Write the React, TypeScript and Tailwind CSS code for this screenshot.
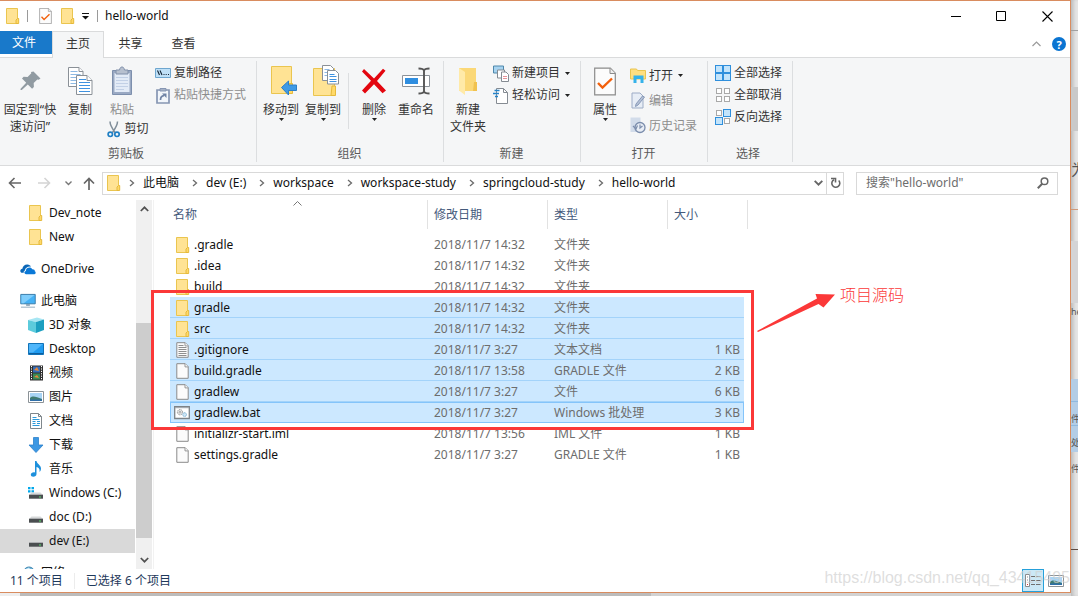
import type { ReactNode } from "react";

/* ---------- icons ---------- */

function Folder({ className = "h-4 w-[15px]" }: { className?: string }) {
  return (
    <svg viewBox="0 0 15 16" className={className} aria-hidden="true">
      <path d="M.5.5h11v15H.5z" fill="#ffe394" stroke="#eac54f" />
      <path d="M11.5 10.5h1.2v5H10v-3.5z" fill="#ffd968" stroke="#e5b93c" />
    </svg>
  );
}

function Page({ lines = false }: { lines?: boolean }) {
  return (
    <svg viewBox="0 0 14 16" className="h-4 w-3.5" aria-hidden="true">
      <path d="M.8.7h8.4l3 3v11.6H.8z" fill="#fbfbfb" stroke="#8b8b8b" />
      <path d="M9 .7v3.2h3.2" fill="#fff" stroke="#8b8b8b" strokeWidth=".9" />
      {lines && (
        <path d="M2.5 3.5h5M2.5 5.5h8M2.5 7.5h8M2.5 9.5h8M2.5 11.5h8M2.5 13.5h8" stroke="#8f8f8f" />
      )}
    </svg>
  );
}

function Batch() {
  return (
    <svg viewBox="0 0 16 14" className="-ml-0.5 h-3.5 w-4 shrink-0" aria-hidden="true">
      <path d="M.7.7h14.6v11.8H.7z" fill="#fff" stroke="#7c8287" strokeWidth="1.3" />
      <path d="M1 1.7h14" stroke="#9aa1a6" />
      <circle cx="6" cy="6.2" r="2.6" fill="#eee" stroke="#8e8e8e" strokeDasharray="1.2 .6" />
      <circle cx="6" cy="6.2" r="1" fill="none" stroke="#8e8e8e" strokeWidth=".7" />
      <circle cx="10.6" cy="8.6" r="1.9" fill="#cfe6f5" stroke="#6fa9cf" strokeDasharray="1 .5" />
    </svg>
  );
}

function CheckedPage({ className }: { className: string }) {
  return (
    <svg viewBox="0 0 22 28" className={className} aria-hidden="true">
      <path d="M.7.7h15.6l5 5v21.6H.7z" fill="#fcfcfc" stroke="#8b8b8b" strokeWidth="1.2" />
      <path d="M16 .7v5.3h5.3" fill="#eee" stroke="#8b8b8b" />
      <path d="M4 15.5l4.5 4.5L18 11" fill="none" stroke="#f2600c" strokeWidth="2.4" />
    </svg>
  );
}

function Caret() {
  return (
    <svg viewBox="0 0 5 3" className="h-[3px] w-[5px]" aria-hidden="true">
      <path d="M0 0h5L2.5 3z" fill="#222" />
    </svg>
  );
}

function Pin() {
  return (
    <svg viewBox="0 0 22 22" className="h-[22px] w-[22px]" aria-hidden="true">
      <path d="M13.500 1.500l7 7-1.800 1.300-1.400-.3-3.600 3.600.2 4-1.800 1.600-4.300-4.300-6 5.600-1.300.1.1-1.300 5.600-6L2 8.500l1.600-1.700 4 .2 3.700-3.700-.3-1.400z" transform="translate(1 0)" fill="#919ba2" />
    </svg>
  );
}

function CopyPages() {
  return (
    <svg viewBox="0 0 26 28" className="h-7 w-[26px]" aria-hidden="true">
      <g fill="#fff" stroke="#8a9097">
        <path d="M1.500.5h10.500l4 4v15H1.500z" />
        <path d="M12 .5v4h4" />
      </g>
      <path d="M3.500 4.500h7M3.500 7.500h10M3.500 10.500h10M3.500 13.500h10M3.500 16.500h10" stroke="#8db9e3" />
      <g fill="#fff" stroke="#8a9097">
        <path d="M9.500 8.500h10.500l5 5v14H9.500z" />
        <path d="M20 8.500v5h5" />
      </g>
      <path d="M12 12.500h7M12 15.500h11M12 18.500h11M12 21.500h11M12 24.500h11" stroke="#3f92e0" />
    </svg>
  );
}

function Clipboard() {
  return (
    <svg viewBox="0 0 22 30" className="h-[30px] w-[22px]" aria-hidden="true">
      <path d="M1.500 4.500h19V28.500h-19z" fill="#9aa9c3" stroke="#7d8fad" />
      <path d="M3.500 7h15v19h-15z" fill="#e3ebf7" />
      <path d="M5 11.500h12M5 14.500h12M5 17.500h12M5 20.500h12M5 23.500h8" stroke="#c2d0e6" />
      <path d="M5 4h3.500C9 1.500 10 1 11 1s2 .5 2.500 3H17v4H5z" fill="#b7c0cf" stroke="#8090aa" />
    </svg>
  );
}

function Scissors() {
  return (
    <svg viewBox="0 0 14 17" className="h-[17px] w-3.5" aria-hidden="true">
      <path d="M3 .5c0 3 1.500 6 5 11M10.500.5c0 3-1.500 6-5 11" fill="none" stroke="#7f8d99" strokeWidth="1.500" />
      <circle cx="3.300" cy="13.300" r="2.200" fill="none" stroke="#1f7fc4" strokeWidth="1.700" />
      <circle cx="10" cy="13.300" r="2.200" fill="none" stroke="#1f7fc4" strokeWidth="1.700" />
    </svg>
  );
}

function PathIcon() {
  return (
    <svg viewBox="0 0 16 10" className="h-2.5 w-4" aria-hidden="true">
      <path d="M.5.5h15v9H.5z" fill="#bfe0f7" stroke="#6ea6cf" />
      <path d="M2.500 2.500l2 4.500M5 2.500l2 4.500" stroke="#123" strokeWidth="1.100" />
      <path d="M8.500 6.500h1M10.700 6.500h1M13 6.500h1" stroke="#123" />
    </svg>
  );
}

function PasteShortcut() {
  return (
    <svg viewBox="0 0 14 17" className="h-[17px] w-3.5" aria-hidden="true">
      <path d="M1 3h12v13H1z" fill="#f2f6fb" stroke="#8696b3" strokeWidth="1.700" />
      <path d="M4 1.500h6V4H4z" fill="#a5b1c6" stroke="#8696b3" />
      <path d="M4.500 13c0-3 1-4 3.500-4.300" fill="none" stroke="#6f83a5" strokeWidth="1.700" />
      <path d="M6 6.500h4.500V11z" fill="#6f83a5" />
    </svg>
  );
}

function MoveTo() {
  return (
    <svg viewBox="0 0 28 30" className="ml-1.5 h-[30px] w-7" aria-hidden="true">
      <path d="M1.500.5h20v27h-20z" fill="#ffe394" stroke="#eac54f" />
      <path d="M19 17.500h3.500v10H18z" fill="#ffd968" stroke="#e5b93c" />
      <path d="M11.500 21.500l7-6.500v4h8v5.500h-8v4.500z" fill="#3f9ae5" stroke="#2b7fc9" />
    </svg>
  );
}

function CopyTo() {
  return (
    <svg viewBox="0 0 28 32" className="ml-1.5 h-8 w-7" aria-hidden="true">
      <path d="M1.500 3.500h21v27h-21z" fill="#ffe394" stroke="#eac54f" />
      <path d="M20 21h3.500v9.500H19z" fill="#ffd968" stroke="#e5b93c" />
      <path d="M10.500.5h8l3 3v12h-11z" fill="#fff" stroke="#8a9097" />
      <path d="M12.500 4.500h5M12.500 7.500h6M12.500 10.500h6" stroke="#8db9e3" />
      <path d="M15.500 5.500h8l3 3V19h-11z" fill="#fff" stroke="#8a9097" />
      <path d="M17.500 9.500h5M17.500 11.500h7M17.500 14.500h7M17.500 16.500h7" stroke="#3f92e0" />
    </svg>
  );
}

function DeleteCross() {
  return (
    <svg viewBox="0 0 26 26" className="h-[26px] w-[26px]" aria-hidden="true">
      <path d="M3 1l10 9.500L22 .7l2.500 2L16 13l9 9.500-3.500 2.700L13 16.300 4 25.500 1 22.500l9-9.700L1 3.500z" fill="#e3060f" />
    </svg>
  );
}

function Rename() {
  return (
    <svg viewBox="0 0 28 28" className="h-7 w-7" aria-hidden="true">
      <path d="M.5 8.500h27v11H.5z" fill="#fff" stroke="#8c9299" />
      <path d="M3 11h13v6H3z" fill="#2f8ee0" />
      <path d="M16.500 1.500c3 0 5 .5 5.500 2 .5-1.500 2.500-2 5.500-2M22 3v22M16.500 26.500c3 0 5-.5 5.500-2 .5 1.500 2.500 2 5.500 2" fill="none" stroke="#555" strokeWidth="1.900" />
    </svg>
  );
}

function NewFolder() {
  return (
    <svg viewBox="0 0 20 29" className="h-[29px] w-5" aria-hidden="true">
      <path d="M1 1h17v23H1z" fill="#fbd877" />
      <path d="M1 1l6 4v23l-6-4.500z" fill="#ffeaa8" />
      <path d="M16 15h3v9h-4z" fill="#f1c24f" />
    </svg>
  );
}

function NewItem() {
  return (
    <svg viewBox="0 0 16 17" className="h-[17px] w-4" aria-hidden="true">
      <path d="M.5 1h10v7H.5z" fill="#a7d3f0" stroke="#4f88ab" />
      <path d="M4.500 5h7v8h-7z" fill="#fff" stroke="#858b92" />
      <path d="M8.500 7h4.500l2.500 2.500v7h-7z" fill="#fff" stroke="#858b92" />
      <path d="M10 11.500h4M10 13.500h4" stroke="#e7939a" />
    </svg>
  );
}

function EasyAccess() {
  return (
    <svg viewBox="0 0 16 17" className="h-[17px] w-4" aria-hidden="true">
      <path d="M3.500 1.500h7l4 4v11h-11z" fill="#fff" stroke="#858b92" />
      <path d="M10.500 1.500v4h4" fill="none" stroke="#858b92" />
      <path d="M1.500 3.500h5M0 6.500h6M2 9.500h3" stroke="#2583c9" strokeWidth="1.300" />
    </svg>
  );
}

function OpenIcon() {
  return (
    <svg viewBox="0 0 16 15" className="h-[15px] w-4" aria-hidden="true">
      <path d="M.5 1h6l1 1.500h8V11H.5z" fill="#ffdf80" stroke="#eac54f" />
      <path d="M3.500 15V7.500h10V15h-3v-4h-4v4z" fill="#35b2ea" />
    </svg>
  );
}

function EditIcon() {
  return (
    <svg viewBox="0 0 15 17" className="h-[17px] w-[15px]" aria-hidden="true">
      <path d="M1 1h8l3 3v12H1z" fill="#e7edf6" stroke="#9dacc6" />
      <path d="M13.500 5L7 13l-2.500 1.500L5 12l6.500-8z" fill="#b5c1d6" stroke="#8799b8" />
    </svg>
  );
}

function HistoryIcon() {
  return (
    <svg viewBox="0 0 16 17" className="h-[17px] w-4" aria-hidden="true">
      <path d="M.5.5h10V15H.5z" fill="#d2dcea" />
      <circle cx="10" cy="10.500" r="5" fill="#e8edf5" stroke="#7b8dac" strokeWidth="1.300" />
      <path d="M10 7.500v3.500l2.500-2M3 9l3 3 1.500-3.500" fill="none" stroke="#7b8dac" strokeWidth="1.200" />
    </svg>
  );
}

function SelectGrid({ on }: { on: boolean[] }) {
  return (
    <svg viewBox="0 0 16 16" className="h-4 w-4" aria-hidden="true">
      {on.map((v, i) => {
        const x = (i % 2) * 8;
        const y = Math.floor(i / 2) * 8;
        return v ? (
          <rect key={i} x={x + 0.5} y={y + 0.5} width="7" height="7" fill="#c3e4fb" stroke="#2f8fdc" />
        ) : (
          <rect key={i} x={x + 1.5} y={y + 1.5} width="5" height="5" fill="#fff" stroke="#a9a9a9" />
        );
      })}
    </svg>
  );
}

function Drive({ win = false }: { win?: boolean }) {
  return (
    <svg viewBox="0 0 16 14" className="h-3.5 w-4" aria-hidden="true">
      {win && <path d="M0 1h2.500v2.300H0zM3.500 1H6v2.300H3.500zM0 4.200h2.500v2.300H0zM3.500 4.200H6v2.300H3.500z" fill="#00a8ec" />}
      <path d="M3.500 6.500h9L15 9H1z" fill="#d7d9da" />
      <path d="M1 8.700h14v4H1z" fill="#4a4e50" />
      <path d="M11 10.500h2v1h-2z" fill="#58e06a" />
    </svg>
  );
}

const navIcons: Record<string, ReactNode> = {
  folder: <Folder />,
  cloud: (
    <svg viewBox="0 0 17 12" className="h-3 w-[17px]" aria-hidden="true">
      <path d="M1.500 10C-.5 9 .2 6 2.500 5.800 3 3 5 1 8 1.200c1.700.1 3 1 3.700 2.300C8 3 5.500 5 5.300 7.500 4 8 3.700 9 4 10z" fill="#0a66b7" />
      <path d="M6.500 11.500c-2.500-.4-2.300-3.300-.2-3.500C6 4.500 11.500 3 13 6.200c2-.2 3 1 2.700 2.300 1.500.6 1.200 3-.5 3z" fill="#0a78d7" />
    </svg>
  ),
  pc: (
    <svg viewBox="0 0 17 16" className="h-4 w-[17px]" aria-hidden="true">
      <path d="M.8 1h15.400v10H.8z" fill="#45b1f5" stroke="#3a7ba8" />
      <path d="M1.500 1.500h14L4 10.500H1.500z" fill="#7fcdfb" />
      <path d="M6.500 11.500h4v1.500h-4zM1 14h15v1H1z" fill="#7594ab" />
    </svg>
  ),
  cube: (
    <svg viewBox="0 0 16 16" className="h-4 w-4" aria-hidden="true">
      <path d="M0 3l9-2.500 7 2-8 2.500z" fill="#a7e6f3" />
      <path d="M0 3l8 2v11l-8-3z" fill="#5ccbdc" />
      <path d="M16 2.500L8 5v11l8-3z" fill="#1c9fc0" />
    </svg>
  ),
  desktop: (
    <svg viewBox="0 0 16 12" className="h-3 w-4" aria-hidden="true">
      <path d="M.5.5h15v11H.5z" fill="#1f9bf0" stroke="#1273b8" />
      <path d="M1 1h14L5 9.500H1z" fill="#4fb6fa" />
      <path d="M1 10.500h14" stroke="#0d5f9f" />
    </svg>
  ),
  video: (
    <svg viewBox="0 0 15 16" className="h-4 w-[15px]" aria-hidden="true">
      <path d="M1 .5h13v15H1z" fill="#303030" />
      <path d="M4 1.500h7v6H4z" fill="#346db8" />
      <path d="M4 8.500h7v6H4z" fill="#3a8a55" />
      <path d="M5 5l3-3 2 4zM5 12l3-2 2 3z" fill="#e8893a" />
      <path d="M2.500 1v14M12.500 1v14" stroke="#fff" strokeDasharray="1.200 1.200" />
    </svg>
  ),
  picture: <Picture />,
  doc: (
    <svg viewBox="0 0 14 16" className="h-4 w-3.5" aria-hidden="true">
      <path d="M1.500.5h8l3 3v12h-11z" fill="#fff" stroke="#7f878c" />
      <path d="M9.500.5v3h3" fill="none" stroke="#7f878c" />
      <path d="M3.500 4.500h4M3.500 6.500h7M3.500 8.500h3M3.500 10.500h3M3.500 12.500h7M8 8.500h3M8 10.500h3" stroke="#2f9ada" />
    </svg>
  ),
  down: (
    <svg viewBox="0 0 16 16" className="h-4 w-4" aria-hidden="true">
      <path d="M5.500.5h5v7.500H15l-7 7.500L1 8h4.500z" fill="#3b97e3" stroke="#2b80cb" strokeWidth=".8" />
    </svg>
  ),
  music: (
    <svg viewBox="0 0 14 16" className="h-4 w-3.5" aria-hidden="true">
      <path d="M6 0h1.500c.5 3 4.500 4 4.500 7.500 0 1.500-.5 2.500-1.500 3.500.7-3-1-4.500-3-5v7c0 1.700-1.500 2.800-3.200 2.800-1.500 0-2.500-.8-2.500-2 0-1.800 2-2.800 4.200-2.300z" fill="#1e90dc" />
    </svg>
  ),
  win: <Drive win />,
  drive: <Drive />,
  net: (
    <svg viewBox="0 0 16 16" className="h-4 w-4" aria-hidden="true">
      <circle cx="9" cy="7.500" r="5.500" fill="#6eb4dd" stroke="#3f86ae" />
      <path d="M6 4l3-1.500 2 3-3 2z" fill="#d2eefa" />
      <path d="M1 9h8v6H1z" fill="#4aa8e8" />
    </svg>
  ),
};

function Picture() {
  return (
    <svg viewBox="0 0 16 12" className="h-3 w-4" aria-hidden="true">
      <path d="M.5.5h15v11H.5z" fill="#fff" stroke="#8b9297" />
      <path d="M2 2h12v8H2z" fill="#a8d4f5" />
      <path d="M2 7c3-3 6-1 12 1v2H2z" fill="#3f7b71" />
      <path d="M2 8.500h12V10H2z" fill="#2f6ea8" />
    </svg>
  );
}

function Chevron() {
  return (
    <svg viewBox="0 0 6 8" className="h-2 w-1.5 shrink-0" aria-hidden="true">
      <path d="M1 1l3.500 3L1 7" fill="none" stroke="#6b6b6b" strokeWidth="1.300" />
    </svg>
  );
}

/* ---------- ribbon ---------- */

function Group({ label, className, children }: { label: string; className: string; children: ReactNode }) {
  return (
    <section aria-label={label} className={`flex shrink-0 flex-col border-r border-[#dcdee0] ${className}`}>
      <div className="flex flex-1 items-start">{children}</div>
      <div className="h-4 pr-1 text-center leading-4 text-[#5a5a5a]">{label}</div>
    </section>
  );
}

function Big({
  icon, label, className = "w-[42px]", caret = false, off = false,
}: { icon: ReactNode; label: ReactNode; className?: string; caret?: boolean; off?: boolean }) {
  return (
    <button disabled={off} className={`flex shrink-0 flex-col items-center ${off ? "text-[#8d8d8d]" : ""} ${className}`}>
      <span className="flex h-10 items-center justify-center">{icon}</span>
      <span className="whitespace-nowrap leading-[17px]">{label}</span>
      {caret && <Caret />}
    </button>
  );
}

function Small({
  icon, label, caret = false, off = false, className = "h-[22px]",
}: { icon: ReactNode; label: string; caret?: boolean; off?: boolean; className?: string }) {
  return (
    <button disabled={off} className={`flex items-center gap-[3px] whitespace-nowrap ${off ? "text-[#8d8d8d]" : ""} ${className}`}>
      <span className="flex w-4 justify-center">{icon}</span>
      {label}
      {caret && <span className="ml-0.5"><Caret /></span>}
    </button>
  );
}

function Ribbon() {
  return (
    <div className="flex h-[109px] shrink-0 overflow-hidden border-y border-[#dadbdc] bg-[#f5f6f7] py-[3px] text-[#333]">
      <Group label="剪贴板" className="w-[257px]">
        <Big icon={<Pin />} label={<>固定到“快<br />速访问”</>} className="w-[60px]" />
        <Big icon={<CopyPages />} label="复制" className="w-10" />
        <div className="flex w-11 flex-col items-center">
          <Big icon={<Clipboard />} label="粘贴" off />
          <Small icon={<Scissors />} label="剪切" className="ml-2.5 h-[22px]" />
        </div>
        <div className="pl-[11px] pt-px">
          <Small icon={<PathIcon />} label="复制路径" />
          <Small icon={<PasteShortcut />} label="粘贴快捷方式" off />
        </div>
      </Group>
      <Group label="组织" className="w-[187px] pl-[3px]">
        <Big icon={<MoveTo />} label="移动到" caret />
        <Big icon={<CopyTo />} label="复制到" caret />
        <div className="mx-1 mt-3 h-14 w-px shrink-0 bg-[#dcdee0]" />
        <Big icon={<DeleteCross />} label="删除" caret />
        <Big icon={<Rename />} label="重命名" />
      </Group>
      <Group label="新建" className="w-[137px] pl-[3px]">
        <Big icon={<NewFolder />} label={<>新建<br />文件夹</>} />
        <div className="pl-1 pt-px">
          <Small icon={<NewItem />} label="新建项目" caret />
          <Small icon={<EasyAccess />} label="轻松访问" caret />
        </div>
      </Group>
      <Group label="打开" className="w-[127px] pl-[3px]">
        <Big icon={<CheckedPage className="h-[29px] w-[22px]" />} label="属性" caret />
        <div className="pl-1 pt-0.5">
          <Small icon={<OpenIcon />} label="打开" caret className="h-[25px]" />
          <Small icon={<EditIcon />} label="编辑" off className="h-[25px]" />
          <Small icon={<HistoryIcon />} label="历史记录" off className="h-[25px]" />
        </div>
      </Group>
      <Group label="选择" className="w-[85px]">
        <div className="pl-[7px] pt-px">
          <Small icon={<SelectGrid on={[true, true, true, true]} />} label="全部选择" />
          <Small icon={<SelectGrid on={[false, false, false, false]} />} label="全部取消" />
          <Small icon={<SelectGrid on={[false, true, true, false]} />} label="反向选择" />
        </div>
      </Group>
    </div>
  );
}

/* ---------- top bars ---------- */

function TitleBar() {
  return (
    <header className="flex h-[30px] shrink-0 items-center pl-1.5">
      <Folder />
      <span className="mx-1.5 h-3 w-px bg-[#9a9a9a]" />
      <button aria-label="属性" className="ml-[5px]"><CheckedPage className="h-4 w-[13px]" /></button>
      <button aria-label="新建文件夹" className="ml-[9px]"><Folder /></button>
      <button aria-label="自定义快速访问工具栏" className="ml-1.5">
        <svg viewBox="0 0 7 7" className="h-[7px] w-[7px]"><path d="M0 .5h7" stroke="#111" /><path d="M0 3h7L3.500 6.500z" fill="#111" /></svg>
      </button>
      <span className="ml-2 h-3 w-px bg-[#9a9a9a]" />
      <h1 className="ml-[7px] text-[#111]">hello-world</h1>
      <div className="ml-auto flex">
        <button aria-label="最小化" className="flex h-[30px] w-11 items-center justify-center">
          <svg viewBox="0 0 11 11" className="h-[11px] w-[11px]"><path d="M0 5.500h10" stroke="#000" /></svg>
        </button>
        <button aria-label="最大化" className="flex h-[30px] w-[46px] items-center justify-center">
          <svg viewBox="0 0 11 11" className="h-[11px] w-[11px]"><path d="M.5.5h9v9h-9z" fill="none" stroke="#000" /></svg>
        </button>
        <button aria-label="关闭" className="flex h-[30px] w-[46px] items-center justify-center">
          <svg viewBox="0 0 11 11" className="h-[11px] w-[11px]"><path d="M.5.5l10 10M10.500.5l-10 10" stroke="#000" strokeWidth="1.100" /></svg>
        </button>
      </div>
    </header>
  );
}

function Tabs() {
  return (
    <nav className="flex h-[26px] shrink-0 items-start text-[#333]">
      <button className="h-[23px] w-[52px] bg-[#1979ca] pr-1 text-white">文件</button>
      <button className="relative z-10 h-[27px] w-[52px] border border-b-0 border-[#dadbdc] bg-[#f5f6f7] pb-0.5">主页</button>
      <button className="h-[25px] w-[53px]">共享</button>
      <button className="h-[25px] w-[53px]">查看</button>
      <div className="ml-auto flex h-[26px] items-center gap-[11px] pr-1">
        <button aria-label="最小化功能区">
          <svg viewBox="0 0 9 6" className="h-1.5 w-[9px]"><path d="M.5 5l4-4 4 4" fill="none" stroke="#9a9a9a" strokeWidth="1.200" /></svg>
        </button>
        <button aria-label="帮助" className="flex h-3.5 w-3.5 items-center justify-center rounded-full bg-[#0a74d1] text-[11px] font-bold leading-none text-white">?</button>
      </div>
    </nav>
  );
}

const crumbs = ["此电脑", "dev (E:)", "workspace", "workspace-study", "springcloud-study", "hello-world"];

function AddressBar() {
  return (
    <div className="flex h-[34px] shrink-0 items-center pr-3">
      <div className="flex w-[102px] shrink-0 items-center pl-2 [&_svg]:block">
        <button aria-label="返回"><svg viewBox="0 0 13 12" className="h-3 w-[13px]"><path d="M6.500 1L1.500 6l5 5M1.500 6H13" fill="none" stroke="#666" strokeWidth="1.600" /></svg></button>
        <button aria-label="前进" className="ml-[17px]" disabled><svg viewBox="0 0 13 12" className="h-3 w-[13px]"><path d="M6.500 1l5 5-5 5M11.500 6H0" fill="none" stroke="#d4d4d4" strokeWidth="1.600" /></svg></button>
        <button aria-label="最近浏览的位置" className="ml-3.5"><svg viewBox="0 0 7 5" className="h-[5px] w-[7px]"><path d="M.5.5l3 3 3-3" fill="none" stroke="#777" strokeWidth="1.400" /></svg></button>
        <button aria-label="上移" className="ml-[11px]"><svg viewBox="0 0 12 13" className="h-[13px] w-3"><path d="M1 6.500l5-5 5 5M6 1.500V13" fill="none" stroke="#666" strokeWidth="1.700" /></svg></button>
      </div>
      <div className="flex h-[23px] min-w-0 flex-1 items-center border border-[#d9d9d9] pl-1">
        <Folder className="mr-0.5 h-4 w-[15px] shrink-0" />
        {crumbs.map((c) => (
          <span key={c} className="ml-[5px] flex items-center whitespace-nowrap">
            <Chevron />
            <button className="mx-2 text-[#111]">{c}</button>
          </span>
        ))}
        <button aria-label="以前的位置" className="ml-auto mr-[3px]">
          <svg viewBox="0 0 9 6" className="h-1.5 w-[9px]"><path d="M.7.8l3.800 3.800L8.300.8" fill="none" stroke="#666" strokeWidth="1.900" /></svg>
        </button>
        <button aria-label="刷新" className="flex h-full w-[17px] items-center justify-center border-l border-[#d9d9d9]">
          <svg viewBox="0 0 11 12" className="h-3 w-[11px]"><path d="M8.700 3.500A4 4 0 1 1 4 2.700" fill="none" stroke="#666" strokeWidth="1.600" /><path d="M1 1.500h4.500v4" fill="none" stroke="#666" strokeWidth="1.600" /></svg>
        </button>
      </div>
      <label className="ml-3 flex h-[23px] w-[202px] shrink-0 items-center border border-[#d9d9d9] pl-[9px] pr-2">
        <input aria-label="搜索" placeholder={'搜索"hello-world"'} className="min-w-0 flex-1 bg-transparent outline-none placeholder:text-[#6d6d6d]" />
        <svg viewBox="0 0 12 12" className="h-3 w-3" aria-hidden="true">
          <circle cx="7.500" cy="4.300" r="3.300" fill="none" stroke="#666" strokeWidth="1.500" />
          <path d="M5.200 6.800L.8 11.200" stroke="#666" strokeWidth="2" />
        </svg>
      </label>
    </div>
  );
}

/* ---------- navigation pane ---------- */

type NavItem = { name: string; icon: string; root?: boolean; active?: boolean };

const navGroups: NavItem[][] = [
  [{ name: "Dev_note", icon: "folder" }, { name: "New", icon: "folder" }],
  [{ name: "OneDrive", icon: "cloud", root: true }],
  [
    { name: "此电脑", icon: "pc", root: true },
    { name: "3D 对象", icon: "cube" },
    { name: "Desktop", icon: "desktop" },
    { name: "视频", icon: "video" },
    { name: "图片", icon: "picture" },
    { name: "文档", icon: "doc" },
    { name: "下载", icon: "down" },
    { name: "音乐", icon: "music" },
    { name: "Windows (C:)", icon: "win" },
    { name: "doc (D:)", icon: "drive" },
    { name: "dev (E:)", icon: "drive", active: true },
  ],
  [{ name: "网络", icon: "net", root: true }],
];

function NavPane() {
  return (
    <aside className="flex w-[152px] shrink-0 overflow-hidden">
      <div className="flex flex-1 flex-col gap-2 overflow-hidden pt-px">
        {navGroups.map((g, i) => (
          <ul key={i}>
            {g.map((n) => (
              <li key={n.name}>
                <a href="#" className={`flex h-6 items-center gap-[5px] whitespace-nowrap text-[#111] ${n.root ? "pl-5" : "pl-7"} ${n.active ? "bg-[#d9d9d9]" : ""}`}>
                  <span className="flex w-4 justify-center">{navIcons[n.icon]}</span>
                  {n.name}
                </a>
              </li>
            ))}
          </ul>
        ))}
      </div>
      <div className="ml-px flex w-4 flex-col items-center bg-[#f0f0f0]">
        <svg viewBox="0 0 9 6" className="mt-1.5 h-1.5 w-[9px]"><path d="M.8 5l3.700-3.700L8.200 5" fill="none" stroke="#505050" strokeWidth="1.700" /></svg>
        <div className="flex-[111]" />
        <div className="w-full flex-[215] bg-[#cdcdcd]" />
        <div className="flex-[19]" />
        <svg viewBox="0 0 9 6" className="mb-1.5 h-1.5 w-[9px]"><path d="M.8 1l3.700 3.700L8.200 1" fill="none" stroke="#505050" strokeWidth="1.700" /></svg>
      </div>
    </aside>
  );
}

/* ---------- file list ---------- */

type FileRow = { name: string; date: string; type: string; size?: string; kind: "dir" | "text" | "page" | "bat"; sel?: boolean };

const files: FileRow[] = [
  { name: ".gradle", date: "2018/11/7 14:32", type: "文件夹", kind: "dir" },
  { name: ".idea", date: "2018/11/7 14:32", type: "文件夹", kind: "dir" },
  { name: "build", date: "2018/11/7 14:32", type: "文件夹", kind: "dir" },
  { name: "gradle", date: "2018/11/7 14:32", type: "文件夹", kind: "dir", sel: true },
  { name: "src", date: "2018/11/7 14:32", type: "文件夹", kind: "dir", sel: true },
  { name: ".gitignore", date: "2018/11/7 3:27", type: "文本文档", size: "1 KB", kind: "text", sel: true },
  { name: "build.gradle", date: "2018/11/7 13:58", type: "GRADLE 文件", size: "2 KB", kind: "page", sel: true },
  { name: "gradlew", date: "2018/11/7 3:27", type: "文件", size: "6 KB", kind: "page", sel: true },
  { name: "gradlew.bat", date: "2018/11/7 3:27", type: "Windows 批处理", size: "3 KB", kind: "bat", sel: true },
  { name: "initializr-start.iml", date: "2018/11/7 13:56", type: "IML 文件", size: "1 KB", kind: "page" },
  { name: "settings.gradle", date: "2018/11/7 3:27", type: "GRADLE 文件", size: "1 KB", kind: "page" },
];

const fileIcons = { dir: <Folder />, text: <Page lines />, page: <Page />, bat: <Batch /> };

function rowStyle(f: FileRow) {
  if (f.kind === "bat") return "bg-[#cce8ff] outline outline-1 -outline-offset-1 outline-[#84c4fa]";
  if (f.sel) return "bg-[#cce8ff] shadow-[inset_0_-1px_0_#a3d3fa]";
  return "";
}

function FileList() {
  return (
    <main className="relative ml-px min-w-0 flex-1 border-l border-[#f2f2f2] pl-4">
      <svg viewBox="0 0 9 5" className="absolute left-[139px] top-px h-[5px] w-[9px]" aria-hidden="true">
        <path d="M.5 4.500l4-4 4 4" fill="none" stroke="#777" />
      </svg>
      <table className="w-[578px] table-fixed border-collapse text-left">
        <colgroup>
          <col className="w-[258px]" /><col className="w-[120px]" /><col className="w-[120px]" /><col className="w-[76px]" /><col className="w-1" />
        </colgroup>
        <thead>
          <tr className="h-[34px] align-top text-[#44597b]">
            {["名称", "修改日期", "类型"].map((h, i) => (
              <th key={h} className="p-0 font-normal">
                <div className={`h-[29px] border-r border-[#e2e2e2] leading-[29px] ${i === 0 ? "pl-[3px]" : "pl-1.5"}`}>{h}</div>
              </th>
            ))}
            <th colSpan={2} className="p-0 font-normal">
              <div className="h-[29px] border-r border-[#e2e2e2] pl-1.5 leading-[29px]">大小</div>
            </th>
          </tr>
        </thead>
        <tbody className="text-[#6d6d6d]">
          {files.map((f) => (
            <tr key={f.name} className="h-[21px] leading-[21px]">
              <td colSpan={4} className="p-0">
                <div className={`flex h-[21px] ${rowStyle(f)}`}>
                  <span className="flex w-[258px] items-center text-[#111]">
                    <span className="ml-1 flex w-5 items-center pl-0.5">{fileIcons[f.kind]}</span>
                    {f.name}
                  </span>
                  <span className="w-[120px] pl-1.5">{f.date}</span>
                  <span className="w-[120px] pl-1.5">{f.type}</span>
                  <span className="flex-1 pr-1 text-right">{f.size}</span>
                </div>
              </td>
            </tr>
          ))}
        </tbody>
      </table>
      <div className="absolute -left-[3px] top-[90px] h-[140px] w-[603px] border-[3px] border-[#fb3838]" />
      <svg viewBox="0 0 80 40" className="absolute left-[603px] top-[93px] h-10 w-20" aria-hidden="true">
        <path d="M0 38L60 5.500 58.500 1 78 1.500 66.500 14.500 61.500 11 1 39z" fill="#fb3838" />
      </svg>
      <p className="absolute left-[686px] top-[82px] font-['Noto_Sans_CJK_SC',sans-serif] text-[16px] font-light leading-6 text-[#fb3838]">项目源码</p>
    </main>
  );
}

/* ---------- status bar ---------- */

function StatusBar() {
  return (
    <footer className="relative flex h-[23px] shrink-0 items-center pl-2.5 text-[#1e395b]">
      <span>11 个项目</span>
      <span className="mx-[11px] h-4 w-px bg-[#ececec]" />
      <span>已选择 6 个项目</span>
      <div className="ml-auto flex items-center gap-1 pr-1.5">
        <button aria-label="详细信息" className="flex h-[23px] w-[22px] items-center justify-center border border-[#26a0da] bg-[#cbe8f6]">
          <svg viewBox="0 0 16 13" className="h-[13px] w-4">
            <path d="M.5.5h4v12h-4z" fill="#fff" stroke="#8a8a8a" />
            <path d="M2 3h1M2 6h1" stroke="#888" /><path d="M2 10.500h1" stroke="#d33" />
            <path d="M6 2.500h4M11 2.500h4.500M6 6.500h4M11 6.500h4.500M6 10.500h4M11 10.500h4.500" stroke="#6f6f6f" />
          </svg>
        </button>
        <button aria-label="大图标"><Picture /></button>
      </div>
      <span className="pointer-events-none absolute right-0 top-0 font-['Liberation_Sans',sans-serif] text-[16px] leading-[18px] text-[#d0d0d0]/70">
        https://blog.csdn.net/qq_43415495
      </span>
    </footer>
  );
}

/* ---------- window behind ---------- */

function Backdrop() {
  return (
    <div aria-hidden="true" className="flex w-[7px] shrink-0 flex-col overflow-hidden bg-[#e6e6e6] text-[9px] leading-[18px] text-[#555] shadow-[inset_4px_0_4px_-2px_#b5b5b5]">
      <div className="h-[31px] border-b border-[#a0a0a0]" />
      <div className="h-14" />
      <div className="h-11 bg-[#c9c9c9]" />
      <div className="h-[78px] whitespace-nowrap pt-[30px] text-[16px]">为</div>
      <div className="h-8 border-t border-[#cf9a7a]" />
      <div className="h-[62px] bg-[#d4d4d6]" />
      <div className="h-[76px]">he</div>
      <div className="flex h-[73px] flex-col bg-[#b3cde6]">
        <span className="h-6 border-b border-[#8fb9de]" />
        <span className="h-6 border-b border-[#8fb9de] pt-2 whitespace-nowrap">件</span>
        <span className="pt-2 whitespace-nowrap">处</span>
      </div>
      <div className="h-[98px] border-b border-[#5d4c44] pt-2 whitespace-nowrap">件</div>
    </div>
  );
}

export default function App() {
  return (
    <div className="flex h-screen w-full bg-white font-['Noto_Sans','Noto_Sans_CJK_SC',sans-serif] text-[12px] leading-4">
      <div className="flex min-w-0 flex-1 flex-col">
        <div className="flex min-h-0 flex-1 flex-col border-y border-r border-[#d98c5f] bg-white">
          <TitleBar />
          <Tabs />
          <Ribbon />
          <AddressBar />
          <div className="flex min-h-0 flex-1">
            <NavPane />
            <FileList />
          </div>
          <StatusBar />
        </div>
        <div className="flex h-[3px] shrink-0"><div className="w-5 bg-[#eee]" /><div className="flex-[3] bg-[#bcbcbc]" /><div className="flex-[2] bg-[#d2d2d2]" /></div>
      </div>
      <Backdrop />
    </div>
  );
}
